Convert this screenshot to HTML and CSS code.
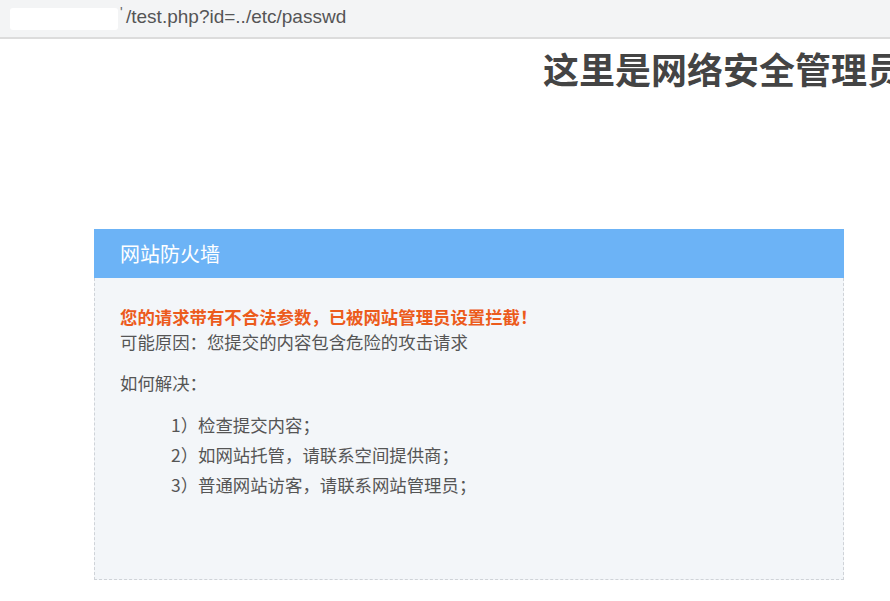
FILE: index.html
```html
<html>
<head>
<meta charset="utf-8">
<link rel="stylesheet" href="styles.css">
</head>
<body>
	<div id="address_bar">
		<span class="blurred"></span><span class="tick">'</span><span class="url">/test.php?id=../etc/passwd</span>
	</div>
	<h1 id="title">这里是网络安全管理员</h1>
	<section id="firewall">
		<div class="panel_head">网站防火墙</div>
		<div class="panel_body">
			<div class="warning">您的请求带有不合法参数，已被网站管理员设置拦截！</div>
			<div class="line">可能原因：您提交的内容包含危险的攻击请求</div>
			<div class="line howto">如何解决：</div>
			<ul class="steps">
				<li>1）检查提交内容；</li>
				<li>2）如网站托管，请联系空间提供商；</li>
				<li>3）普通网站访客，请联系网站管理员；</li>
			</ul>
		</div>
	</section>
</body>
</html>
```

FILE: styles.css
```css
*
{
	font-family: "Noto Sans CJK SC", "Liberation Sans", sans-serif;
}

body
{
	margin: 0;
	padding: 0;
	border: 0;
	background: #fff;
	overflow: hidden;
}

#address_bar
{
	height: 37px;
	background-color: #f3f4f5;
	border-bottom: 2px solid #dcdcdc;
	display: flex;
	align-items: center;
	white-space: nowrap;
}

#address_bar .blurred
{
	width: 108px;
	height: 22px;
	margin-left: 10px;
	background: #fff;
	border-radius: 3px;
}

#address_bar .tick
{
	font-family: "Liberation Sans", sans-serif;
	font-size: 14px;
	color: #666;
	width: 6px;
	margin-left: 2px;
	align-self: flex-start;
	margin-top: 4px;
}

#address_bar .url
{
	font-family: "Liberation Sans", sans-serif;
	font-size: 19px;
	color: #555;
	margin-top: -3px;
}

#title
{
	margin: 8px 0 0 0;
	padding-left: 543px;
	font-size: 36px;
	line-height: 42px;
	font-weight: bold;
	color: #444;
	white-space: nowrap;
	overflow: hidden;
}

#firewall
{
	width: 750px;
	margin: 140px 0 0 94px;
}

.panel_head
{
	height: 49px;
	line-height: 49px;
	padding-left: 26px;
	background-color: #6cb3f6;
	color: #fff;
	font-size: 20px;
}

.panel_body
{
	box-sizing: border-box;
	height: 302px;
	padding: 26px 25px 0 25px;
	background-color: #f3f6f9;
	border: 1px dashed #cfd3d8;
	border-top: 0;
	color: #555;
	font-size: 17.4px;
}

.warning
{
	color: #ec5b1c;
	font-weight: bold;
	line-height: 25px;
}

.line
{
	line-height: 25px;
}

.howto
{
	margin-top: 16px;
}

ul.steps
{
	list-style: none;
	margin: 15px 0 0 0;
	padding-left: 51px;
}

ul.steps li
{
	line-height: 30px;
}
```
